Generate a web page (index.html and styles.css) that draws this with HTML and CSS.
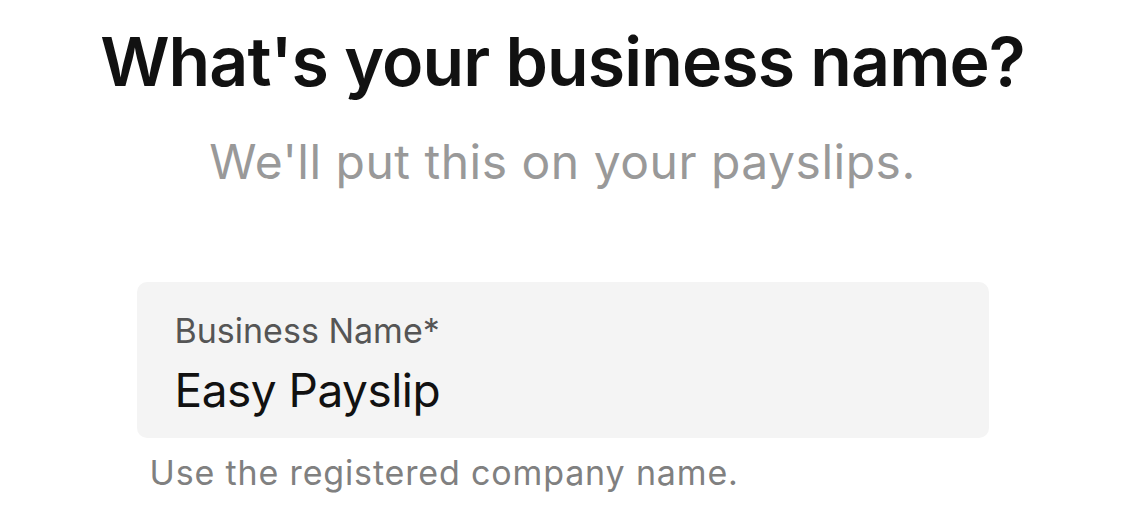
FILE: index.html
```html
<!DOCTYPE html>
<html lang="en">
<head>
<meta charset="utf-8">
<title>Business name</title>
<link rel="stylesheet" href="styles.css">
</head>
<body>
<main class="page">
  <h1 class="title">What's your business name?</h1>
  <p class="subtitle">We'll put this on your payslips.</p>
  <div class="form">
    <label class="field">
      <span class="field-label">Business Name*</span>
      <span class="field-value">Easy Payslip</span>
    </label>
    <p class="helper">Use the registered company name.</p>
  </div>
</main>
</body>
</html>
```
FILE: styles.css
```css
html, body {
  margin: 0;
  padding: 0;
  background: #ffffff;
}
body {
  font-family: Inter, "Noto Sans", sans-serif;
  width: 1125px;
  height: 524px;
  overflow: hidden;
}
.page {
  display: flex;
  flex-direction: column;
  align-items: center;
}
.title {
  margin: 0;
  padding-top: 19px;
  font-size: 68px;
  line-height: 84px;
  font-weight: 600;
  color: #111111;
  letter-spacing: -0.9px;
}
.subtitle {
  margin: 0;
  padding-top: 30px;
  font-size: 48px;
  line-height: 58px;
  font-weight: 400;
  color: #999999;
  letter-spacing: 0.5px;
}
.form {
  width: 852px;
  margin-top: 91px;
  display: flex;
  flex-direction: column;
}
.field {
  display: flex;
  flex-direction: column;
  background: #f4f4f4;
  border-radius: 10px;
  height: 156px;
  box-sizing: border-box;
  padding: 28px 38px 0;
}
.field-label {
  font-size: 34px;
  line-height: 42px;
  color: #555555;
}
.field-value {
  margin-top: 10px;
  font-size: 46px;
  line-height: 56px;
  color: #111111;
  letter-spacing: -0.5px;
}
.helper {
  margin: 0;
  padding: 14px 0 0 13px;
  font-size: 34px;
  line-height: 42px;
  color: #808080;
  letter-spacing: 0.85px;
}
```
